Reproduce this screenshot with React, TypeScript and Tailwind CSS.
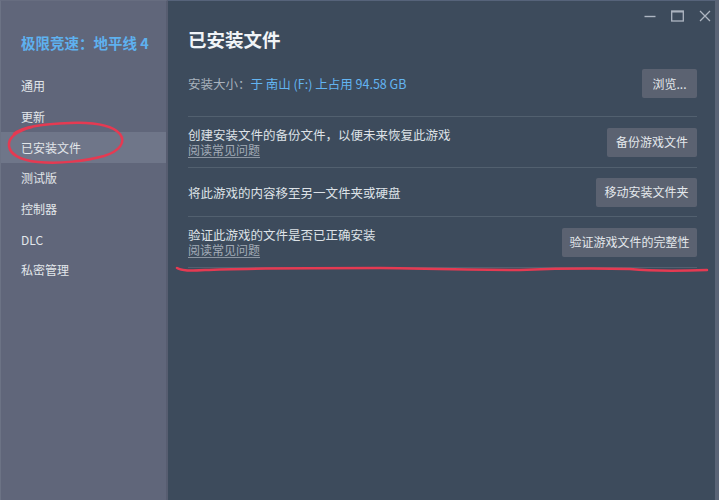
import React from "react";

const navItems = ["通用", "更新", "已安装文件", "测试版", "控制器", "DLC", "私密管理"];

function Btn({ label, w }: { label: string; w: string }) {
  return (
    <div
      className={`${w} h-[29px] shrink-0 flex items-center justify-center bg-[#5b6271] text-[12px] text-[#e4e8ec] rounded-[2px]`}
    >
      {label}
    </div>
  );
}

function Row({ text, link, btn, w }: { text: string; link?: boolean; btn: string; w: string }) {
  return (
    <div className="flex items-center justify-between pt-[10px] pb-[9.5px] border-b border-[#52606f]">
      <div className="flex flex-col">
        <span className="text-[12.5px] leading-[15px] text-[#dde2e7]">{text}</span>
        {link && (
          <span className="text-[12px] leading-[15px] text-[#a3acb7] underline underline-offset-2 decoration-[#8d96a2]">
            阅读常见问题
          </span>
        )}
      </div>
      <Btn label={btn} w={w} />
    </div>
  );
}

export default function App() {
  return (
    <div
      className="relative flex w-[719px] h-[500px] overflow-hidden bg-[#3d4b5c]"
      style={{ fontFamily: '"Noto Sans CJK SC", "Noto Sans", sans-serif' }}
    >
      {/* Sidebar */}
      <div className="w-[168px] shrink-0 h-full flex flex-col bg-[#60667a] border-l border-[#6c7385] border-t border-t-[#676d80] border-r-2 border-r-[#575d70]">
        <div className="pt-[31px] pl-[20px] h-[54px] leading-[22px] text-[14.5px] font-bold text-[#5eb1ef]">
          极限竞速：地平线 4
        </div>
        <div className="mt-[16px] flex flex-col">
          {navItems.map((n) => (
            <div
              key={n}
              className={`h-[30.7px] flex items-center pl-[20px] text-[12px] text-[#e2e6ea] ${
                n === "已安装文件" ? "bg-[#6f7689]" : ""
              }`}
            >
              {n}
            </div>
          ))}
        </div>
      </div>

      {/* Main */}
      <div className="flex-1 h-full flex flex-col pl-[20px] pr-[18px] border-t border-[#56637a]">
        <div className="h-[25px] flex justify-end items-start pt-[9px] gap-[15px] text-[#aeb6c2]">
          <svg width="12" height="12" viewBox="0 0 12 12">
            <line x1="0.5" y1="6.5" x2="11.5" y2="6.5" stroke="#aeb6c2" strokeWidth="1.4" />
          </svg>
          <svg width="13" height="12" viewBox="0 0 13 12">
            <rect x="0.7" y="1" width="11.6" height="10" fill="none" stroke="#aeb6c2" strokeWidth="1.3" />
            <line x1="0.7" y1="1.8" x2="12.3" y2="1.8" stroke="#aeb6c2" strokeWidth="1.4" />
          </svg>
          <svg width="12" height="12" viewBox="0 0 12 12" className="mr-[-14px]">
            <path d="M1 1 L11 11 M11 1 L1 11" stroke="#aeb6c2" strokeWidth="1.3" />
          </svg>
        </div>
        <div className="h-[26px] leading-[26px] text-[18.5px] font-bold text-[#f1f4f7]">已安装文件</div>
        <div className="mt-[17px] flex items-center justify-between pb-[18px] border-b border-[#52606f]">
          <div className="text-[12.5px] leading-[16px]">
            <span className="text-[#a9b2bd]">安装大小：</span>
            <span className="text-[#63b4f1]">于 南山 (F:) 上占用 94.58 GB</span>
          </div>
          <Btn label="浏览..." w="w-[55px]" />
        </div>
        <Row text="创建安装文件的备份文件，以便未来恢复此游戏" link btn="备份游戏文件" w="w-[90px]" />
        <Row text="将此游戏的内容移至另一文件夹或硬盘" btn="移动安装文件夹" w="w-[101px]" />
        <Row text="验证此游戏的文件是否已正确安装" link btn="验证游戏文件的完整性" w="w-[135px]" />
      </div>
      <div className="w-[4px] h-full shrink-0 bg-[#5a6476]" />

      {/* Red annotations */}
      <svg
        className="absolute inset-0 pointer-events-none"
        width="719"
        height="500"
        viewBox="0 0 719 500"
      >
        <path
          d="M14 134 C 22 126, 45 124, 70 123 C 95 122, 112 125, 120 134 C 126 142, 120 151, 104 156 C 86 161, 60 164, 38 162 C 20 160, 10 154, 9 146 C 8 138, 16 131, 32 127"
          fill="none"
          stroke="#e53a52"
          strokeWidth="2.5"
          strokeLinecap="round"
        />
        <path
          d="M177 268 C 182 271, 190 271, 205 270 C 240 268, 300 268, 380 268 C 420 268, 440 270, 520 270 C 545 269, 580 268, 630 269 C 650 271, 680 271, 707 270"
          fill="none"
          stroke="#e53a52"
          strokeWidth="2.5"
          strokeLinecap="round"
        />
      </svg>
    </div>
  );
}
